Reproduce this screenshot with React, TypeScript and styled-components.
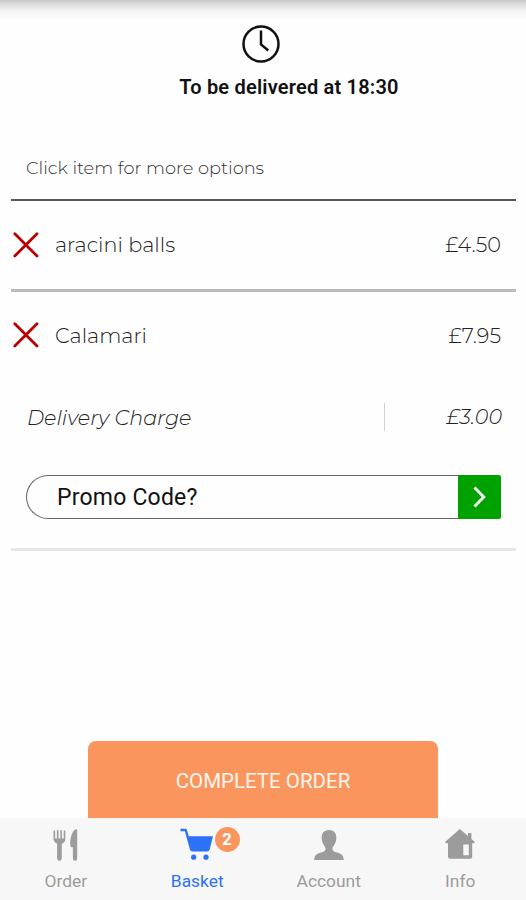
import React from 'react';
import styled, { createGlobalStyle } from 'styled-components';

const GlobalStyle = createGlobalStyle`
  * { box-sizing: border-box; }
  body { margin: 0; background: #fff; }
  button { border: 0; padding: 0; background: none; cursor: pointer; }
`;

const Screen = styled.main`
  width: 526px;
  height: 900px;
  display: flex;
  flex-direction: column;
  overflow: hidden;
  background: linear-gradient(#c8c8c8 0, #e0e0e0 5px, #f3f3f3 11px, #fefefe 20px, #fefefe 100%);
  font-family: Roboto, sans-serif;
  color: #111;
`;

const DeliveryTime = styled.header`
  height: 142px;
  padding-top: 24px;
  display: flex;
  flex-direction: column;
  align-items: center;
  svg { display: block; margin-right: 4px; }
`;

const DeliveryText = styled.h1`
  margin: 10px 0 0 52px;
  font-size: 20px;
  line-height: 26px;
  font-weight: 600;
  letter-spacing: 0.2px;
  white-space: nowrap;
`;

const Basket = styled.section`
  flex: none;
  margin: 0 10px 0 11px;
  height: 409px;
  border-bottom: 3px solid #e6e6e6;
  font-family: Montserrat, Inter, sans-serif;
  font-weight: 300;
`;

const Hint = styled.p`
  margin: 0;
  height: 59px;
  padding: 13px 15px 0;
  border-bottom: 2px solid #555;
  font-size: 17.8px;
  line-height: 26px;
  color: #333;
`;

const ItemRow = styled.div<{ $divided?: boolean }>`
  height: ${p => (p.$divided ? 91 : 85)}px;
  padding: ${p => (p.$divided ? '0 15px 1px 2px' : '1px 15px 0 2px')};
  display: flex;
  align-items: center;
  border-bottom: ${p => (p.$divided ? '3px solid #bbb' : '0')};
  font-size: 20.8px;
  color: #222;
`;

const RemoveButton = styled.button`
  display: flex;
  width: 42px;
`;

const ItemName = styled.span`
  flex: 1;
`;

const Price = styled.span`
  text-align: right;
`;

const ChargeRow = styled.div`
  height: 80px;
  padding: 0 14px 0 16px;
  display: flex;
  align-items: center;
  font-size: 20.7px;
  font-style: italic;
  color: #222;
`;

const ChargePrice = styled.span`
  width: 118px;
  height: 28px;
  line-height: 28px;
  border-left: 1px solid #d2d2d2;
  text-align: right;
`;

const Promo = styled.form`
  margin: 18px 15.5px 0 15px;
  height: 44px;
  display: flex;
`;

const PromoInput = styled.input`
  flex: 1;
  min-width: 0;
  padding: 0 0 0 30px;
  border: 1.5px solid #666;
  border-right: 0;
  border-radius: 22px 0 0 22px;
  background: #fefefe;
  outline: none;
  font: 400 23px Roboto, sans-serif;
  letter-spacing: 0.2px;
  color: #111;
  &::placeholder { color: #111; opacity: 1; }
`;

const PromoButton = styled.button`
  width: 43px;
  height: 44px;
  display: grid;
  place-items: center;
  border-radius: 0 2px 2px 0;
  background: #00a200;
`;

const CompleteButton = styled.button`
  width: 350px;
  height: 77px;
  margin: auto auto 0 88px;
  padding-top: 2px;
  border-radius: 8px 8px 0 0;
  background: #fa965d;
  color: #fff5ee;
  font: 400 20.5px Roboto, sans-serif;
`;

const TabBar = styled.nav`
  flex: none;
  height: 82px;
  display: grid;
  grid-template-columns: repeat(4, 1fr);
  background: #f7f7f7;
`;

const Tab = styled.button<{ $active?: boolean }>`
  position: relative;
  padding-top: 9px;
  display: flex;
  flex-direction: column;
  align-items: center;
  color: ${p => (p.$active ? '#2d72f6' : '#9c9c9c')};
  font: 400 17.4px/22px Roboto, sans-serif;
  svg { display: block; margin-bottom: 7px; }
`;

const Badge = styled.span`
  position: absolute;
  left: 83px;
  top: 9px;
  width: 25px;
  height: 25px;
  border-radius: 50%;
  background: #fa965d;
  color: #fff;
  font-size: 17px;
  line-height: 25px;
  font-weight: 700;
  text-align: center;
`;

const Clock = () => (
  <svg width="40" height="40" viewBox="0 0 40 40" fill="none" stroke="#111" strokeWidth="2.5">
    <circle cx="20" cy="20" r="17.5" />
    <path d="M20 6.5V20.5L27.3 26.5" />
  </svg>
);

const Cross = () => (
  <svg width="26" height="26" viewBox="0 0 26 26" stroke="#b80000" strokeWidth="2.8" strokeLinecap="round">
    <path d="M1.8 1.8L24 24M24 1.8L1.8 24" />
  </svg>
);

const Chevron = () => (
  <svg width="18" height="24" viewBox="0 0 18 24" fill="none" stroke="#f5fff5" strokeWidth="2.9">
    <path d="M4.5 2.5L13.8 12L4.5 21.5" />
  </svg>
);

const Cutlery = () => (
  <svg width="36" height="36" viewBox="0 0 36 36" fill="currentColor">
    <path d="M5.5 4Q6.3 2.4 7.1 4V11.5H8.9V3.6Q9.7 2 10.5 3.6V11.5H12.3V3.6Q13.1 2 13.9 3.6V11.5H15.7V4Q16.5 2.4 17.3 4V12.5Q17.1 15.5 13.8 16.7V31.5Q13.6 33.8 11.5 33.8Q9.3 33.8 9.1 31.5V16.7Q5.9 15.5 5.5 12.5Z" />
    <path d="M29.2 2.8V31.8Q29.1 33.8 27.1 33.8Q25 33.8 24.9 31.8V20.3H22.9Q21.7 18 22.3 13.5Q23.4 6 26.7 2.8Q28.4 1.6 29.2 2.8Z" />
  </svg>
);

const Cart = () => (
  <svg width="36" height="36" viewBox="0 0 36 36" fill="currentColor">
    <path d="M1.5 1.7H6.5Q7.7 1.8 8 3L9.8 9.2H34L30.6 22.8Q30.1 24.5 28.3 24.5H13.4Q11.5 24.5 11 22.7L5.9 4.3H1.5Z" />
    <circle cx="14.7" cy="30.2" r="2.6" />
    <circle cx="27" cy="30.2" r="2.6" />
  </svg>
);

const Person = () => (
  <svg width="36" height="36" viewBox="0 0 36 36" fill="currentColor">
    <path d="M18 3C23.4 3 25.7 6.8 25.3 12C25 16.2 22.8 18.5 21.5 20.8C21.2 23.8 22.6 24.7 26.2 25.6C31 27 32.5 28.8 32.8 33H3.2C3.5 28.8 5 27 9.8 25.6C13.4 24.7 14.8 23.8 14.5 20.8C13.2 18.5 11 16.2 10.7 12C10.3 6.8 12.6 3 18 3Z" />
  </svg>
);

const House = () => (
  <svg width="36" height="36" viewBox="0 0 36 36" fill="currentColor">
    <path fillRule="evenodd" d="M17.8 2L26 9V5.9H29.4V11.9L33 15L31.8 16.2H30.2V29.7Q30.2 31.7 28.2 31.7H8Q6 31.7 6 29.7V16.2H4.2L3 15ZM21.3 17.4V28.2H26.8V17.4Z" />
  </svg>
);

export default function App() {
  return (
    <>
      <GlobalStyle />
      <Screen>
        <DeliveryTime>
          <Clock />
          <DeliveryText>To be delivered at 18:30</DeliveryText>
        </DeliveryTime>
        <Basket>
          <Hint>Click item for more options</Hint>
          <ItemRow $divided>
            <RemoveButton aria-label="Remove aracini balls"><Cross /></RemoveButton>
            <ItemName>aracini balls</ItemName>
            <Price>£4.50</Price>
          </ItemRow>
          <ItemRow>
            <RemoveButton aria-label="Remove Calamari"><Cross /></RemoveButton>
            <ItemName>Calamari</ItemName>
            <Price>£7.95</Price>
          </ItemRow>
          <ChargeRow>
            <ItemName>Delivery Charge</ItemName>
            <ChargePrice>£3.00</ChargePrice>
          </ChargeRow>
          <Promo onSubmit={e => e.preventDefault()}>
            <PromoInput placeholder="Promo Code?" />
            <PromoButton aria-label="Apply code"><Chevron /></PromoButton>
          </Promo>
        </Basket>
        <CompleteButton>COMPLETE ORDER</CompleteButton>
        <TabBar>
          <Tab><Cutlery />Order</Tab>
          <Tab $active><Cart />Basket<Badge>2</Badge></Tab>
          <Tab><Person />Account</Tab>
          <Tab><House />Info</Tab>
        </TabBar>
      </Screen>
    </>
  );
}
